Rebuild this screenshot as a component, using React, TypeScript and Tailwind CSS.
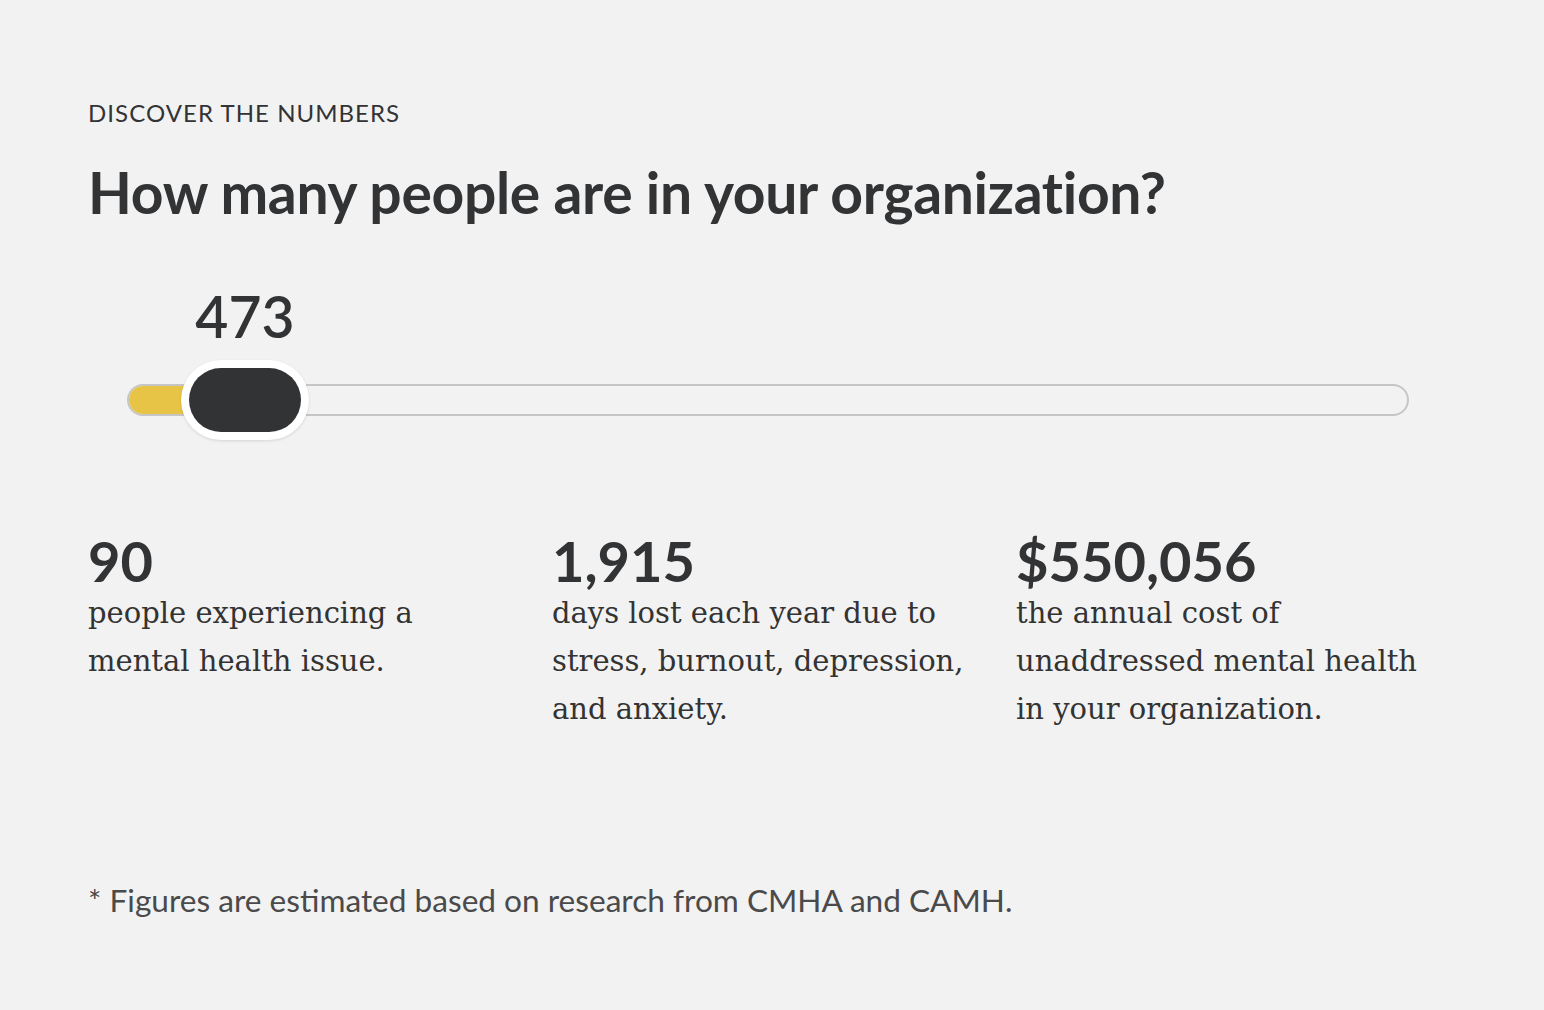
const stats = [
  { value: "90", lines: ["people experiencing a", "mental health issue."] },
  {
    value: "1,915",
    lines: ["days lost each year due to", "stress, burnout, depression,", "and anxiety."],
  },
  {
    value: "$550,056",
    lines: ["the annual cost of", "unaddressed mental health", "in your organization."],
  },
];

const App = () => {
  const people = 473;
  // where the thumb centre sits along the track
  const pct = 9.2;

  return (
    <div className="min-h-screen w-full bg-[#f2f2f2] text-[#323335] font-['Lato',sans-serif]">
      <div className="px-[88px] pt-[98px] pb-[60px]">
        <p className="text-[24px] leading-[30px] tracking-[1.05px] uppercase">
          Discover the numbers
        </p>
        <h1 className="mt-[32px] text-[57px] leading-[64px] font-bold tracking-[-0.32px]">
          How many people are in your organization?
        </h1>

        {/* Slider */}
        <div className="ml-[39px] w-[1282px]">
          <div className="relative mt-[60px] h-[64px]">
            <span
              className="absolute top-0 -translate-x-1/2 text-[57px] leading-[64px] font-semibold"
              style={{ left: `${pct}%` }}
            >
              {people}
            </span>
          </div>
          <div className="relative mt-[12px] h-[80px] flex items-center">
            <div className="relative h-[32px] w-full rounded-full border-2 border-[#c6c6c6] bg-[#f2f2f2] overflow-hidden">
              <div
                className="h-full bg-[#e8c446]"
                style={{ width: `${pct}%` }}
              />
            </div>
            <div
              className="absolute top-0 h-[80px] w-[128px] -translate-x-1/2 rounded-full bg-white p-[8px] shadow-[0_1px_3px_rgba(0,0,0,0.12)]"
              style={{ left: `${pct}%` }}
            >
              <div className="h-full w-full rounded-full bg-[#323335]" />
            </div>
          </div>
        </div>

        {/* Results */}
        <div className="mt-[93px] grid grid-cols-[464px_464px_464px]">
          {stats.map((s) => (
            <div key={s.value}>
              <div className="text-[56px] leading-[56px] font-bold">{s.value}</div>
              <p className="font-['DejaVu_Serif',serif] text-[29px] leading-[48px] text-[#333]">
                {s.lines.map((l, i) => (
                  <span key={i} className="block">
                    {l}
                  </span>
                ))}
              </p>
            </div>
          ))}
        </div>

        <p className="mt-[147px] text-[31.6px] leading-[40px] text-[#4a4a4b]">
          * Figures are estimated based on research from CMHA and CAMH.
        </p>
      </div>
    </div>
  );
};

export default App;
